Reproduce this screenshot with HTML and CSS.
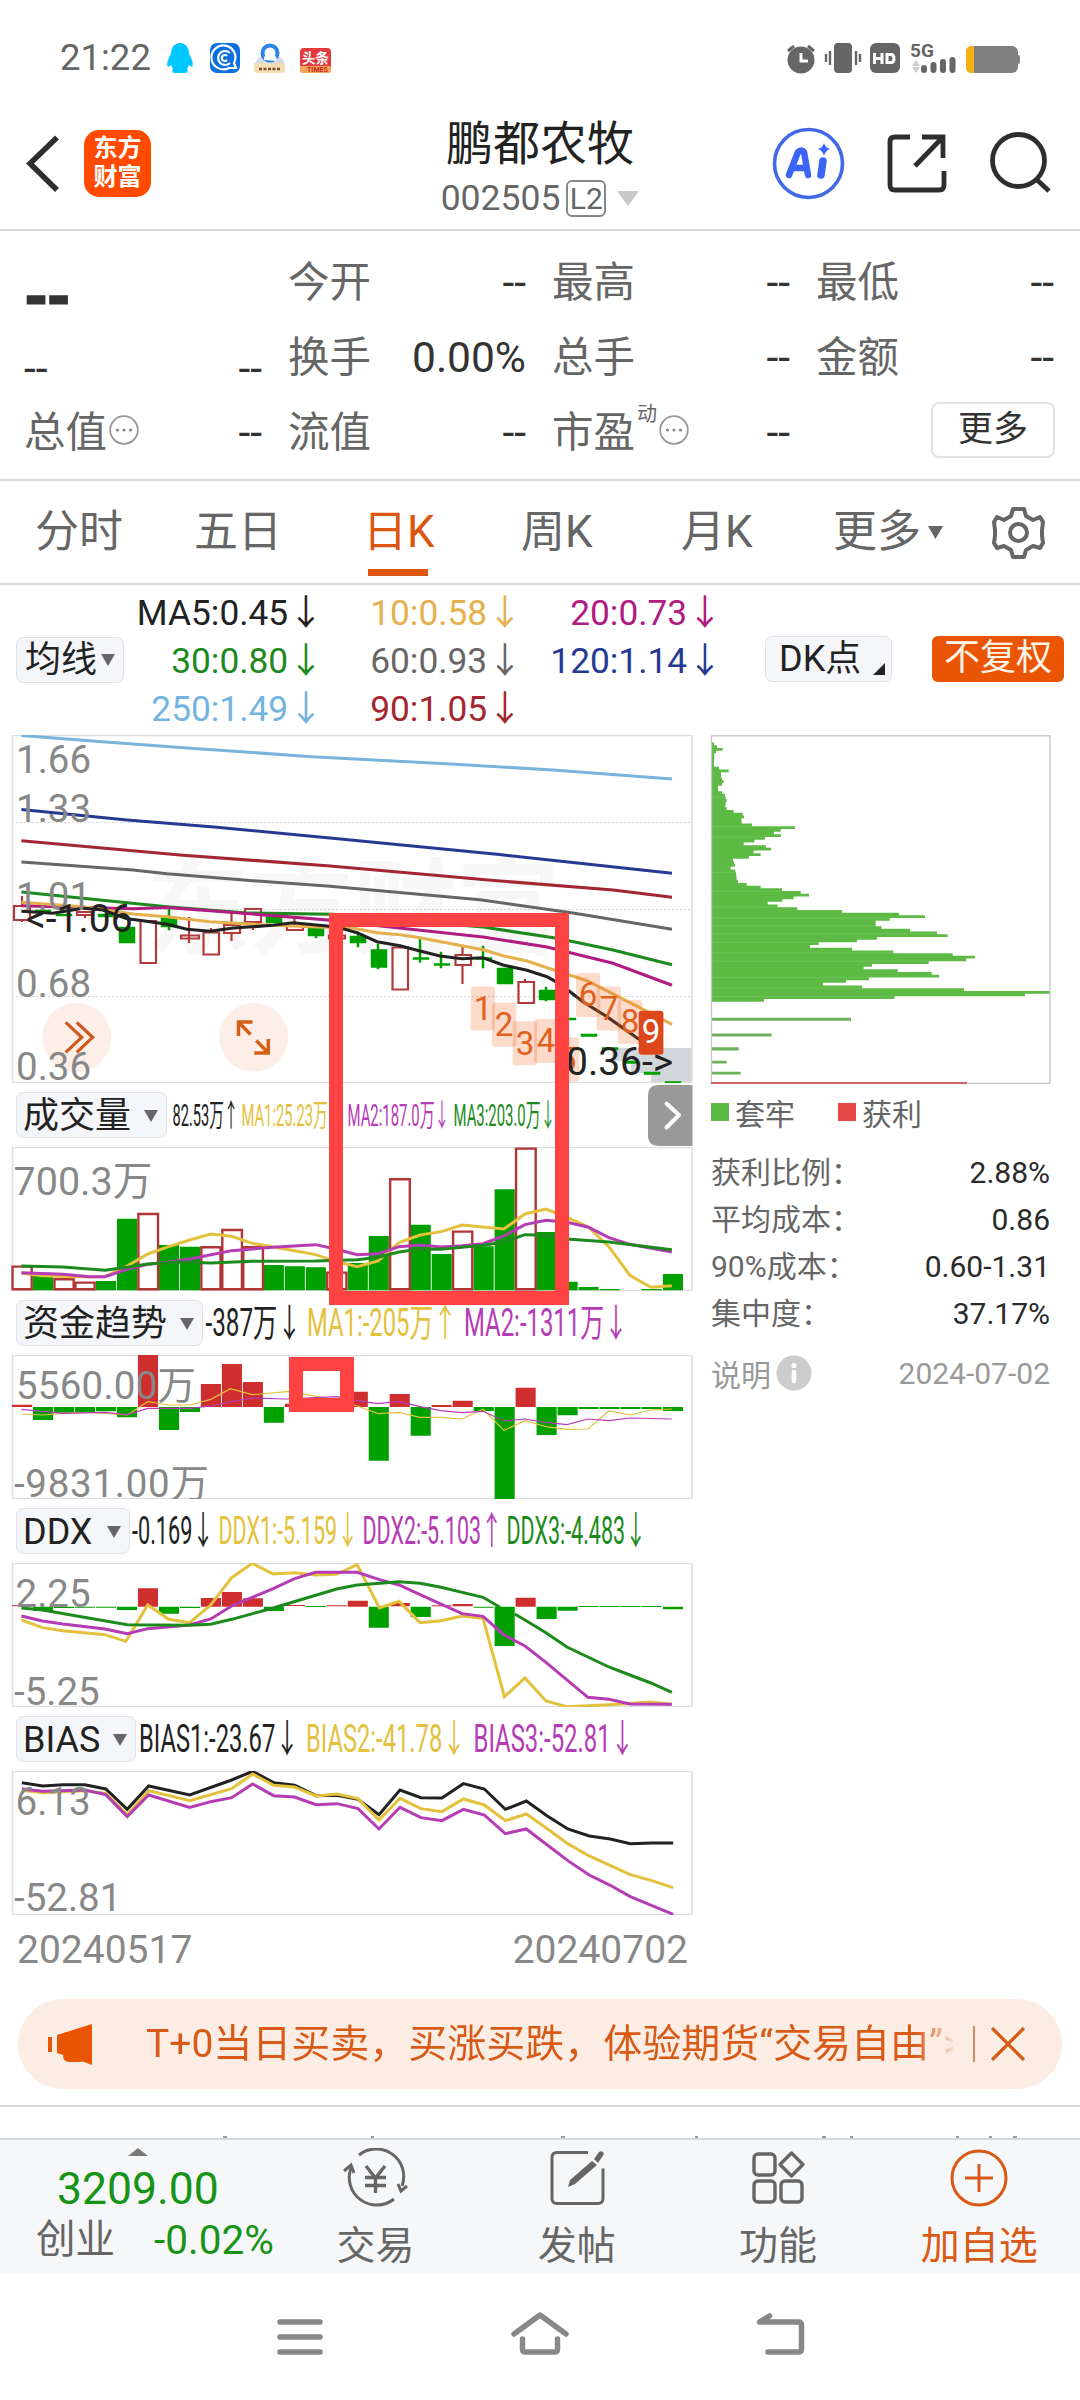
FILE: index.html
```html
<!DOCTYPE html>
<html lang="zh-CN">
<head>
<meta charset="utf-8">
<title>鹏都农牧 002505</title>
<link rel="stylesheet" href="styles.css">
</head>
<body>
<div class="phone">
  <div class="status">
    <span class="clock">21:22</span>
    <svg class="status-apps" width="180" height="40" viewBox="160 38 180 40">
      <path fill="#00c8ff" d="M180 43c6 0 9 5 9 11 3 5 5 10 3 13l-3-2-2 4c2 3 0 4-3 4h-8c-3 0-5-1-3-4l-2-4-3 2c-2-3 0-8 3-13 0-6 3-11 9-11z"/>
      <rect x="210" y="43" width="30" height="30" rx="7" fill="#0a6fe0"/>
      <g fill="none" stroke="#fff" stroke-width="2.2"><path d="M229 68a12 12 0 1 1 5-5l2 5z"/><path d="M230 53a7 7 0 1 0 0 10"/><path d="M227 56a3 3 0 1 0 0 4"/></g>
      <path fill="#d5dbe6" d="M255 64q2-8 15-10 13 2 15 10z"/>
      <circle cx="270" cy="53" r="7.500" fill="#fff" stroke="#2f84e8" stroke-width="4"/>
      <path fill="#fff" d="M264 60q0-7 6-7 7 2 7 8z"/>
      <path fill="#f3dfb5" d="M254 63h31v7q0 3-4 3h-23q-4 0-4-3z"/>
      <path stroke="#7a4d24" stroke-width="2.500" stroke-dasharray="3 1.500" d="M259 69h22"/>
      <rect x="300" y="48" width="31" height="25" rx="4" fill="#e4393c"/>
      <path fill="#f2a45a" d="M300 66h31v4q0 3-3 3h-25q-3 0-3-3z"/>
      <text x="302" y="63" font-size="13.500" font-weight="700" fill="#fff">头条</text>
      <text x="307" y="72" font-size="7" font-weight="700" fill="#c22">TIMES</text>
    </svg>
    <svg class="status-sys" width="240" height="40" viewBox="784 38 240 40">
      <circle cx="801" cy="60" r="13.500" fill="#666"/>
      <path d="M801 53v8h7" fill="none" stroke="#fff" stroke-width="3"/>
      <path d="M788 51l6-5M814 51l-6-5" stroke="#666" stroke-width="3"/>
      <rect x="834" y="43" width="18" height="30" rx="4" fill="#666"/>
      <path d="M830 51v14M856 51v14M826 54v8M860 54v8" stroke="#666" stroke-width="2.400"/>
      <rect x="870" y="43" width="30" height="30" rx="6" fill="#666"/>
      <path d="M874.500 53v11M882 53v11M874.500 58.500H882M887 54.500h4q3 0 3 4t-3 4h-4z" fill="none" stroke="#fff" stroke-width="3"/>
      <text x="910" y="57" font-size="19" font-weight="700" fill="#666">5G</text>
      <path fill="#ccc" d="M912 66l4-6 4 6zM912 67l4 6 4-6z"/>
      <path stroke="#666" stroke-width="6" stroke-linecap="round" d="M924 68v2M933.500 65v5M943 62v8M952.500 60v10"/>
      <rect x="966" y="46" width="52" height="27" rx="6" fill="#808080"/>
      <path fill="#f8b312" d="M972 46h2v27h-2q-6 0-6-6v-15q0-6 6-6z"/>
      <rect x="1016" y="55" width="4" height="9" rx="2" fill="#808080"/>
    </svg>
  </div>

  <header class="topbar">
    <svg class="back" width="40" height="66" viewBox="24 130 40 66"><path d="M57 137.500L30 163.500 57 190" fill="none" stroke="#2e2e2e" stroke-width="5.500"/></svg>
    <div class="brand"><span>东方</span><span>财富</span></div>
    <div class="stock">
      <h1>鹏都农牧</h1>
      <div class="code">002505<span class="level">L2</span><svg width="22" height="15" viewBox="0 0 22 15"><path fill="#c8c8c8" d="M0 0h22L11 15z"/></svg></div>
    </div>
    <svg class="actions" width="292" height="80" viewBox="768 124 292 80">
      <circle cx="808.500" cy="163.500" r="34" fill="none" stroke="#4169e8" stroke-width="3.600"/>
      <path d="M789 175l9-23q4-3 6 0l4 23M793 168h13" fill="none" stroke="#3b66f5" stroke-width="6.500" stroke-linecap="round" stroke-linejoin="round"/>
      <path d="M823 161l-2 14" stroke="#3b66f5" stroke-width="7.500" stroke-linecap="round"/>
      <path d="M824 143q1.500 5 6 6-4.500 1.500-6 7-1.500-5.500-6-7 4.500-1 6-6z" fill="#3b66f5"/>
      <g fill="none" stroke="#2e2e2e" stroke-width="4.800"><path d="M910 137h-15q-5 0-5 5v43q0 5 5 5h44q5 0 5-5v-14"/><path d="M922 137h21v21M943 137l-28 29"/><circle cx="1018.500" cy="160.500" r="26"/><path d="M1036 179l13 12"/></g>
    </svg>
  </header>

  <section class="quotes">
    <div class="q"><b class="price">--</b></div>
    <div class="q"><span>今开</span><i>--</i></div>
    <div class="q"><span>最高</span><i>--</i></div>
    <div class="q"><span>最低</span><i>--</i></div>
    <div class="q low"><i>--</i><i>--</i></div>
    <div class="q"><span>换手</span><i>0.00%</i></div>
    <div class="q"><span>总手</span><i>--</i></div>
    <div class="q"><span>金额</span><i>--</i></div>
    <div class="q"><span>总值<svg class="dots" width="30" height="30" viewBox="0 0 30 30"><circle cx="15" cy="15" r="13.800" fill="none" stroke="#999" stroke-width="1.800"/><path stroke="#888" stroke-width="3.200" stroke-linecap="round" d="M8.500 15h0M15 15h0M21.500 15h0"/></svg></span><i>--</i></div>
    <div class="q"><span>流值</span><i>--</i></div>
    <div class="q"><span>市盈<sup>动</sup><svg class="dots" width="30" height="30" viewBox="0 0 30 30"><circle cx="15" cy="15" r="13.800" fill="none" stroke="#999" stroke-width="1.800"/><path stroke="#888" stroke-width="3.200" stroke-linecap="round" d="M8.500 15h0M15 15h0M21.500 15h0"/></svg></span><i>--</i></div>
    <div class="q end"><button class="more">更多</button></div>
  </section>

  <nav class="tabs">
    <span class="t1">分时</span><span class="t2">五日</span><span class="t3 on">日K</span><span class="t4">周K</span><span class="t5">月K</span>
    <span class="t6">更多<svg width="15" height="13" viewBox="0 0 14 12"><path fill="#666" d="M0 0h14L7 12z"/></svg></span>
    <svg class="gear" width="56" height="56" viewBox="990 504 56 56"><g fill="none" stroke="#666" stroke-width="4" stroke-linejoin="round"><path d="M1013 509h11l2 7 7 4 7-3 3 5 0 0-1 8v6l1 7-3 5-7-2-7 4-2 7h-11l-2-7-7-4-7 2-3-5 1-7v-6l-1-8 3-5 7 3 7-4z"/><circle cx="1018.500" cy="532.500" r="8.500"/></g></svg>
  </nav>

  <section class="averages">
    <div class="chip ma-chip">均线<svg width="14" height="12" viewBox="0 0 14 12"><path fill="#666" d="M0 0h14L7 12z"/></svg></div>
    <div class="ma">
      <span class="c-black">MA5:0.45↓</span><span class="c-gold">10:0.58↓</span><span class="c-pink">20:0.73↓</span>
      <span class="c-green">30:0.80↓</span><span class="c-gray">60:0.93↓</span><span class="c-navy">120:1.14↓</span>
      <span class="c-sky">250:1.49↓</span><span class="c-red">90:1.05↓</span>
    </div>
    <div class="chip dk">DK点<svg width="12" height="12" viewBox="0 0 12 12"><path fill="#222" d="M12 0v12H0z"/></svg></div>
    <div class="adjust">不复权</div>
  </section>

  <main class="board">
    <div class="charts">
      <svg class="plot" width="700" height="348" viewBox="0 735 700 348">
        <g fill="#d3d6db"><path d="M612 1048h80v36h-41v-11h-20v-12h-19z"/></g>
        <text x="146" y="946" font-size="104" font-weight="700" fill="#f7f7f7" textLength="414">东方财富</text>
        <path d="M12 822.500h680M12 909.500h680M12 996.500h680" stroke="#d4d4d4" stroke-width="1.200" stroke-dasharray="2 2"/>
        <rect x="12.500" y="735.500" width="679.500" height="347" fill="none" stroke="#dedede" stroke-width="1.500"/>
        <g fill="none" stroke="#b33a3a" stroke-width="2.200">
          <path d="M14 906h16v14H14zM22 896v10M22 920v2M77 912h15v3H77zM85 915v3M140.500 921h15.500v42h-15.500zM181 935.500h18v3h-18zM189 917v26M203.500 932.500h15.500v22h-15.500zM211 928v4M224 925h16v8h-16zM231.500 913v12M231.500 933v8M245 909h16v13h-16zM253 922v8M287 926h16v4h-16zM294.500 917v9M329 935.500h16v3h-16zM392.500 947.500h15.500v42h-15.500zM455.500 955h15.500v10h-15.500zM462.500 947v8M462.500 965v19M518.500 982h15.500v21h-15.500zM525 979v3"/>
        </g>
        <path fill="#00a000" stroke="#00a000" stroke-width=".5" d="M35 910h16v3H35zM56 914h16v2H56zM98 914h15v3H98zM119 927h16v16h-16zM161 917h16v10h-16zM168 909h2v21h-2zM266 916h16v7h-16zM308 927h16v9h-16zM315 926h2v12h-2zM350 936h16v7h-16zM357 932h2v15h-2zM371 949.500h16v18h-16zM377 944h2v25h-2zM413 957.500h16v2h-16zM419 938.500h2v24h-2zM434 963.500h16v2h-16zM440 952h2v16h-2zM476 957.500h16v2h-16zM482 946h2v22h-2zM497 968h16v16h-16zM539 990h16v10h-16zM545 987h2v14h-2zM560 1018h16v2h-16zM581 1034h16v2.500h-16zM602 1047.500h16v2.500h-16zM623 1061h16v2.500h-16zM644 1072h16v2.500h-16zM665 1081.500h16v2.500h-16z"/>
        <g fill="none" stroke-width="3.100">
          <path stroke="#79b4dc" d="M21.400 735.500L89 740.700 187 748 312 756.700 446 763.700 553 770 672 779"/>
          <path stroke="#263a94" d="M21.400 809.500L127 820 214 827 330 838 497 854.300 672 873.300"/>
          <path stroke="#a32630" d="M21.400 840.700L180 855 330 866 497 880.700 613 890 672 897.300"/>
          <path stroke="#666" d="M21.400 862L133 870 167 873.700 247 880.300 330 886.300 480 899.700 573 913 672 929.300"/>
          <path stroke="#1c8a1c" d="M21.400 892L100 900 167 906.700 247 913 333 914.300 483 927 557 938.300 613 950 672 964.700"/>
          <path stroke="#b01c80" d="M21.400 905.700L83 907.500 133 908.700 167 907.500 233 912.500 328 920 390 927 483 937 547 947 613 963.300 672 985.300"/>
          <path stroke="#e5b04d" d="M21.400 902.300L83 906.700 133 914 167 916.700 210 921.700 273 925.300 323 927.300 350 927.500 377 932.700 400 934.700 420 937.700 483 949.700 503 955.700 527 961 550 968.700 587 980.700 630 1002.700 672 1024.300"/>
          <path stroke="#222" d="M21.400 911.300L53 913.300 83 908.300 103 910 127 918.700 143 920.700 167 924.300 187 929.300 210 931.300 233 928 273 925.300 293 922.700 327 926 345 929.300 357 932.700 377 941.700 400 945.700 420 951 440 956 462 958.700 483 957.700 503 965 527 970.300 547 976.700 557 982.300 570 991.700 583 1001.700 607 1016.700 640 1040"/>
        </g>
        <circle cx="76.700" cy="1037.300" r="34.500" fill="#fdefe8"/><circle cx="253.700" cy="1037.300" r="34.500" fill="#fdefe8"/>
        <path fill="none" stroke="#d0581c" stroke-width="3.200" d="M65.700 1022.300l16 15-16 15M76.700 1022.300l16 15-16 15"/>
        <path fill="none" stroke="#d65f17" stroke-width="3.500" d="M238.500 1036v-14h14M238.500 1022l12 12.500M268.300 1039v14h-14M268.300 1053l-12-12.500"/>
        <g class="axis"><text x="16" y="772.500">1.66</text><text x="16" y="821.700">1.33</text><text x="16" y="910">1.01</text><text x="16" y="996.700">0.68</text><text x="16" y="1079.700">0.36</text></g>
        <text x="26" y="931.500" font-size="39" fill="#222">&lt;-1.06</text>
        <g fill="#f4631e" fill-opacity=".23"><rect x="470.700" y="986.500" width="24.300" height="44" rx="3"/><rect x="492" y="1002.700" width="24.300" height="44" rx="3"/><rect x="512.700" y="1021.300" width="24.300" height="44" rx="3"/><rect x="534" y="1019" width="24.300" height="44" rx="3"/><rect x="555" y="1037.500" width="24.300" height="44" rx="3"/><rect x="576" y="973" width="24.300" height="44" rx="3"/><rect x="596.700" y="986.500" width="24.300" height="44" rx="3"/><rect x="617.700" y="1000" width="24.300" height="44" rx="3"/></g>
        <g class="nine"><text x="483" y="1019.500">1</text><text x="504" y="1035.500">2</text><text x="525" y="1054.500">3</text><text x="546" y="1052">4</text><text x="567" y="1070.500">5</text><text x="588" y="1006">6</text><text x="609" y="1019.500">7</text><text x="630" y="1033">8</text></g>
        <text x="566" y="1075" font-size="39" fill="#222">0.36-&gt;</text>
        <rect x="638.700" y="1010.700" width="24.700" height="44" rx="3" fill="#dc481a"/>
        <g class="nine"><text x="651" y="1043" class="w">9</text></g>
      </svg>

      <div class="ind">
        <div class="chip w1">成交量<svg width="14" height="12" viewBox="0 0 14 12"><path fill="#666" d="M0 0h14L7 12z"/></svg></div>
        <svg width="533" height="64" viewBox="167 1083 533 64" font-size="31">
          <text x="172.500" y="1126" textLength="66" lengthAdjust="spacingAndGlyphs" fill="#222">82.53万↑</text>
          <text x="241.500" y="1126" textLength="101" lengthAdjust="spacingAndGlyphs" fill="#e3c13c">MA1:25.23万↓</text>
          <text x="347.500" y="1126" textLength="102" lengthAdjust="spacingAndGlyphs" fill="#b53cb5">MA2:187.0万↓</text>
          <text x="453.500" y="1126" textLength="102" lengthAdjust="spacingAndGlyphs" fill="#1c8a1c">MA3:203.0万↓</text>
        </svg>
      </div>
      <svg class="plot" width="700" height="144" viewBox="0 1147 700 144">
        <rect x="12.500" y="1147.500" width="679.500" height="143" fill="none" stroke="#dedede" stroke-width="1.500"/>
        <g transform="translate(0 1080) scale(.4464 .3333)">
          <path fill="#00a000" d="M74 587h45v44h-45zM215 603h45v28h-45zM262 416h45v215h-45zM356 495h45v136h-45zM403 500h45v131h-45zM591 555h45v76h-45zM638 559h45v72h-45zM685 562h45v69h-45zM779 549h45v82h-45zM826 468h45v163h-45zM920 434h45v197h-45zM967 522h45v109h-45zM1061 499h45v132h-45zM1108 328h45v303h-45zM1202 456h45v175h-45zM1249 605h45v26h-45zM1296 621h45v10h-45zM1343 627h45v4h-45zM1437 627h45v4h-45zM1485 582h45v49h-45z"/>
          <path class="ln" fill="#fff" stroke="#b03636" stroke-width="2.400" d="M28 560h43v68h-43zM122 598h43v30h-43zM169 608h43v20h-43zM310 402h44v226h-44zM451 502h43v126h-43zM498 450h44v178h-44zM545 502h44v126h-44zM733 578h43v50h-43zM874 298h44v330h-44zM1015 455h43v173h-43zM1156 206h44v422h-44z"/>
          <g class="ln3">
            <path stroke="#e3c13c" d="M48 580L95 587 165 590 235 590 285 558 331 522 378 500 425 480 472 462 519 469 565 490 610 500 660 512 707 524 754 545 800 560 847 543 894 488 941 465 988 455 1035 435 1082 441 1129 447 1176 402 1223 387 1270 412 1317 440 1364 500 1411 586 1458 622 1505 617"/>
            <path stroke="#b53cb5" d="M48 578L141 583 200 590 235 590 285 568 331 553 378 546 425 537 519 512 610 502 707 494 754 508 800 524 847 521 894 500 941 495 988 501 1035 497 1082 491 1129 468 1176 434 1223 421 1270 427 1317 441 1364 473 1411 493 1505 516"/>
            <path stroke="#1c8a1c" d="M48 558L141 561 235 571 285 562 331 552 400 546 472 549 565 544 707 543 800 539 847 532 894 516 941 507 988 508 1082 496 1129 486 1176 464 1223 466 1270 477 1364 486 1505 509"/>
          </g>
        </g>
        <g class="axis"><text x="13.500" y="1195" font-size="39.500">700.3万</text></g>
      </svg>

      <div class="ind">
        <div class="chip w2">资金趋势<svg width="14" height="12" viewBox="0 0 14 12"><path fill="#666" d="M0 0h14L7 12z"/></svg></div>
        <svg width="497" height="64" viewBox="203 1291 497 64" font-size="38">
          <text x="205.500" y="1335.700" textLength="96" lengthAdjust="spacingAndGlyphs" fill="#222">-387万↓</text>
          <text x="307" y="1335.700" textLength="150" lengthAdjust="spacingAndGlyphs" fill="#e3c13c">MA1:-205万↑</text>
          <text x="464" y="1335.700" textLength="164" lengthAdjust="spacingAndGlyphs" fill="#b53cb5">MA2:-1311万↓</text>
        </svg>
      </div>
      <svg class="plot" width="700" height="144" viewBox="0 1355 700 144">
        <rect x="12.500" y="1355.500" width="679.500" height="143" fill="none" stroke="#dedede" stroke-width="1.500"/>
        <g transform="translate(0 1300) scale(.4464 .3333)">
          <path fill="#00a000" d="M74 321h45v39h-45zM121 321h45v17h-45zM168 321h45v15h-45zM215 321h45v13h-45zM262 321h45v31h-45zM356 321h45v69h-45zM403 321h45v15h-45zM591 321h45v47h-45zM826 321h45v161h-45zM920 321h45v86h-45zM1061 321h45v12h-45zM1108 321h45v276h-45zM1202 321h45v84h-45zM1249 321h45v25h-45zM1296 321h45v6h-45zM1343 321h45v6h-45zM1390 321h45v6h-45zM1437 321h45v6h-45zM1485 321h45v12h-45z"/>
          <path fill="#cf2e2e" d="M27 314h45v7h-45zM309 165h45v156h-45zM450 252h45v69h-45zM497 192h45v129h-45zM544 246h45v75h-45zM638 311h45v10h-45zM779 275h45v46h-45zM873 282h45v39h-45zM967 315h45v6h-45zM1014 302h45v19h-45zM1155 263h45v58h-45z"/>
          <g class="ln1">
            <path stroke="#e3c13c" d="M48 342L95 345 141 340 200 337 285 345 331 305 378 315 425 315 472 298 516 266 565 284 648 274 720 292 754 300 800 318 847 341 894 337 941 352 988 352 1035 357 1082 328 1129 391 1176 362 1223 380 1270 388 1317 387 1364 333 1411 345 1458 330 1505 327"/>
            <path stroke="#b53cb5" d="M48 328L141 340 235 337 285 344 331 325 425 325 472 318 519 305 565 294 640 297 754 290 800 302 847 311 894 304 941 320 988 332 1035 338 1082 334 1129 363 1176 357 1223 367 1270 374 1317 357 1364 362 1411 354 1505 357"/>
          </g>
        </g>
        <g class="axis"><text x="16" y="1399" textLength="180">5560.00万</text><text x="14" y="1496.700" textLength="195">-9831.00万</text></g>
      </svg>

      <div class="ind">
        <div class="chip w3">DDX<svg width="14" height="12" viewBox="0 0 14 12"><path fill="#666" d="M0 0h14L7 12z"/></svg></div>
        <svg width="570" height="64" viewBox="130 1499 570 64" font-size="38.500">
          <text x="132" y="1544" textLength="82" lengthAdjust="spacingAndGlyphs" fill="#222">-0.169↓</text>
          <text x="218.500" y="1544" textLength="140" lengthAdjust="spacingAndGlyphs" fill="#e3c13c">DDX1:-5.159↓</text>
          <text x="362.500" y="1544" textLength="140" lengthAdjust="spacingAndGlyphs" fill="#b53cb5">DDX2:-5.103↑</text>
          <text x="506.500" y="1544" textLength="140" lengthAdjust="spacingAndGlyphs" fill="#1c8a1c">DDX3:-4.483↓</text>
        </svg>
      </div>
      <svg class="plot" width="700" height="144" viewBox="0 1563 700 144">
        <rect x="12.500" y="1563.500" width="679.500" height="143" fill="none" stroke="#dedede" stroke-width="1.500"/>
        <g transform="translate(0 1510) scale(.4464 .3333)">
          <path fill="#00a000" d="M74 290h45v13h-45zM121 290h45v4h-45zM168 290h45v3h-45zM215 290h45v3h-45zM262 290h45v10h-45zM356 290h45v21h-45zM403 290h45v4h-45zM591 290h45v13h-45zM685 288h45v3h-45zM826 290h45v63h-45zM920 290h45v31h-45zM1061 290h45v3h-45zM1108 290h45v118h-45zM1202 290h45v37h-45zM1249 290h45v12h-45zM1296 288h45v3h-45zM1343 288h45v3h-45zM1390 288h45v3h-45zM1437 288h45v3h-45zM1485 290h45v8h-45z"/>
          <path fill="#cf2e2e" d="M27 286h45v3h-45zM309 235h45v55h-45zM450 264h45v26h-45zM497 246h45v44h-45zM544 265h45v25h-45zM638 285h45v3h-45zM732 286h45v3h-45zM779 272h45v18h-45zM873 279h45v10h-45zM967 286h45v3h-45zM1014 282h45v7h-45zM1155 263h45v27h-45z"/>
          <g class="ln3">
            <path stroke="#e3c13c" d="M48 330L95 353 141 362 235 374 282 394 331 285 378 328 425 338 472 285 519 203 565 160 612 192 660 188 707 195 754 193 800 164 850 294 894 274 941 338 988 332 1035 318 1082 325 1130 560 1176 504 1223 573 1270 590 1317 587 1364 584 1458 576 1505 583"/>
            <path stroke="#b53cb5" d="M48 318L95 333 141 342 235 357 285 371 331 356 425 345 472 327 519 288 565 262 612 236 660 206 707 187 800 187 850 209 894 225 941 254 1035 311 1082 319 1129 375 1176 408 1223 457 1317 562 1364 568 1411 582 1505 583"/>
            <path stroke="#1c8a1c" d="M48 294L95 300 285 344 425 346 472 343 519 328 612 294 754 237 800 225 894 215 941 220 988 232 1082 262 1120 292M1153 312L1176 330 1223 368 1270 411 1364 471 1411 495 1458 519 1505 547"/>
          </g>
        </g>
        <g class="axis"><text x="15.500" y="1606.700">2.25</text><text x="14" y="1704.700">-5.25</text></g>
      </svg>

      <div class="ind">
        <div class="chip w4">BIAS<svg width="14" height="12" viewBox="0 0 14 12"><path fill="#666" d="M0 0h14L7 12z"/></svg></div>
        <svg width="564" height="64" viewBox="136 1707 564 64" font-size="38.500">
          <text x="139" y="1752" textLength="160" lengthAdjust="spacingAndGlyphs" fill="#222">BIAS1:-23.67↓</text>
          <text x="306" y="1752" textLength="160" lengthAdjust="spacingAndGlyphs" fill="#e3c13c">BIAS2:-41.78↓</text>
          <text x="473.500" y="1752" textLength="161" lengthAdjust="spacingAndGlyphs" fill="#b53cb5">BIAS3:-52.81↓</text>
        </svg>
      </div>
      <svg class="plot" width="700" height="144" viewBox="0 1771 700 144">
        <rect x="12.500" y="1771.500" width="679.500" height="143" fill="none" stroke="#dedede" stroke-width="1.500"/>
        <g transform="translate(0 1720) scale(.4464 .3333)" class="ln3">
          <path stroke="#222" d="M49 188L96 198 141 194 190 194 237 207 285 268 333 198 425 225 519 180 566 154 613 188 660 196 708 227 755 226 802 238 849 284 896 210 943 233 990 234 1038 191 1085 207 1132 268 1179 243 1226 288 1272 327 1320 348 1367 357 1412 371 1460 369 1508 369"/>
          <path stroke="#e3c13c" d="M49 211L96 218 190 212 237 220 285 284 333 212 425 242 519 206 566 162 613 196 660 201 708 228 755 222 802 236 849 300 896 235 943 266 990 275 1038 237 1085 255 1132 302 1179 282 1226 326 1272 371 1320 408 1412 464 1460 482 1508 503"/>
          <path stroke="#b53cb5" d="M49 207L96 214 190 210 237 224 285 290 333 225 425 262 472 245 519 233 566 192 613 227 660 231 708 254 755 251 802 266 849 327 896 262 943 293 990 302 1038 268 1085 285 1132 341 1179 327 1226 375 1272 422 1320 465 1367 496 1412 530 1508 583"/>
        </g>
        <g class="axis"><text x="15.500" y="1815">6.13</text><text x="14" y="1910.700">-52.81</text></g>
      </svg>
      <div class="dates"><span>20240517</span><span>20240702</span></div>

      <svg class="handle" width="45" height="61" viewBox="648 1085 45 61"><path fill="#999" d="M659 1085h33.500v61H659q-11 0-11-11v-39q0-11 11-11z"/><path fill="none" stroke="#fff" stroke-width="4" stroke-linecap="round" stroke-linejoin="round" d="M666.500 1103.500l12.500 11.500-12.500 12.500"/></svg>
      <div class="mark mark-big"></div>
      <div class="mark mark-small"></div>
    </div>

    <aside class="cost">
      <svg class="dist" width="380" height="350" viewBox="700 735 380 350">
        <g transform="translate(690 580) scale(.33333 .34435)">
          <path fill="#5cba45" d="M63 472H72v7.840H81v7.840H98v7.840H78v7.840H73v15.700H72v23.500H87v7.840H116v7.840H93v15.700H96v7.840H101v7.840H96v7.840H84v15.700H96v7.840H105v7.840H107v7.840H110v7.840H107v7.840H106v7.840H110v7.840H131v7.840H158v7.840H162v7.840H154v7.840H155v7.840H186v7.840H315v7.840H272v7.840H252v7.840H273v7.840H225v7.840H193v7.840H161v7.840H228v7.840H243v7.840H191v7.840H212v7.840H177v7.840H129v7.840H132v7.840H135v7.840H122v7.840H136v7.840H138v7.840H139v7.840H140v7.840H144v7.840H170v7.840H212v7.840H276v7.840H332v7.840H357v7.840H311v7.840H277v7.840H233v7.840H263v7.840H322v7.840H456v7.840H627v7.840H705v7.840H599v7.840H557v15.700H574v7.840H660v7.840H741v7.840H773v7.840H561v7.840H501v7.840H386v7.840H360v7.840H486v7.840H610v7.840H788v7.840H855v7.840H828v7.840H716v7.840H546v7.840H521v7.840H623v7.840H725v7.840H747v7.840H537v7.840H468v7.840H399v7.840H516v7.840H822v7.840H1080v7.840H1005v7.840H613v7.840H222V1225H63z"/>
          <path stroke="#76c862" stroke-width="2" d="M63 560H93M63 630H105M63 716H186M63 747H225M63 849H136M63 904H276M63 950H263M63 982H599M63 1005H557M63 1028H741M63 1052H386M63 1083H610M63 1107H716M63 1154H537M63 1185H516M63 1209H613"/>
          <path fill="#6db05c" d="M63 1271H483v9H63zM63 1317H245v9H63zM63 1357H146v9H63zM63 1396H110v8H63zM63 1428H152v8H63z"/>
        </g>
        <rect x="711.500" y="735.800" width="338.500" height="347.500" fill="none" stroke="#c4c4c4" stroke-width="1.300"/>
        <path stroke="#cc6464" stroke-width="1.800" d="M711 1083h256"/>
      </svg>
      <div class="key"><i class="g"></i>套牢<i class="r"></i>获利</div>
      <dl>
        <div><dt>获利比例：</dt><dd>2.88%</dd></div>
        <div><dt>平均成本：</dt><dd>0.86</dd></div>
        <div><dt>90%成本：</dt><dd>0.60-1.31</dd></div>
        <div><dt>集中度：</dt><dd>37.17%</dd></div>
      </dl>
      <div class="note"><span>说明</span><svg width="36" height="36" viewBox="0 0 36 36"><circle cx="18" cy="18" r="17.500" fill="#ccc"/><circle cx="18" cy="10.500" r="2.600" fill="#fff"/><path stroke="#fff" stroke-width="4.600" stroke-linecap="round" d="M18 17v9"/></svg><time>2024-07-02</time></div>
    </aside>
  </main>

  <div class="promo">
    <svg width="48" height="42" viewBox="46 2022 48 42"><path fill="#ea5504" d="M48 2036h4v15h-4zM57 2034l35-11v41l-8-3q-2-1-4 0h-11q-6 0-6-7l-6-2z"/></svg>
    <p>T+0当日买卖，买涨买跌，体验期货“交易自由”&gt;</p>
    <i></i>
    <svg width="36" height="36" viewBox="0 0 36 36"><path stroke="#d95a17" stroke-width="3.200" d="M2 2l32 32M34 2L2 34"/></svg>
  </div>
  <div class="peek"><svg width="1080" height="2" viewBox="0 0 1080 2"><path stroke="#999" stroke-width="2" d="M223 1h4M371 1h3M561 1h4M695 1h3M822 1h4M850 1h3M956 1h3M989 1h3M1013 1h4"/></svg></div>

  <footer class="toolbar">
    <div class="index">
      <svg width="20" height="8" viewBox="0 0 20 8"><path fill="#7a7a7a" d="M10 0l10 8H0z"/></svg>
      <b>3209.00</b>
      <p><span>创业</span><em>-0.02%</em></p>
    </div>
    <div class="tool"><svg width="68" height="60" viewBox="341 2148 68 60"><g fill="none" stroke="#666" stroke-width="3"><path d="M359 2155a27.500 27.500 0 0 1 43 31M394 2199a27.500 27.500 0 0 1-43-31"/><path d="M344 2171l7-6 3 8M407 2186l-6 5-3-7"/><path stroke-width="3.400" d="M366 2166l9.500 12 9.500-12M375.500 2178v15M365 2177.500h21M365 2185.500h21"/></g></svg>交易</div>
    <div class="tool"><svg width="68" height="60" viewBox="543 2148 68 60"><g fill="none" stroke="#666" stroke-width="3"><path d="M588 2152.500h-31q-5 0-5 5v41q0 5 5 5h41q5 0 5-5v-30"/></g><path fill="#666" d="M594 2159l5-7q4-2 5 2l-6 9zM592 2161l5 4-22 19-7 3 2-7z"/></svg>发帖</div>
    <div class="tool"><svg width="68" height="60" viewBox="744 2148 68 60"><g fill="none" stroke="#666" stroke-width="3.400"><rect x="754" y="2154" width="21" height="21" rx="4"/><rect x="754" y="2181" width="21" height="21" rx="4"/><rect x="781" y="2181" width="21" height="21" rx="4"/><path d="M791.500 2153l11.500 11.500-11.500 11.500-11.500-11.500z" stroke-linejoin="round"/></g></svg>功能</div>
    <div class="tool add"><svg width="68" height="60" viewBox="945 2148 68 60"><g fill="none" stroke="#d95a17" stroke-width="3"><circle cx="979" cy="2178" r="27"/><path d="M965 2178h28M979 2164v28"/></g></svg>加自选</div>
  </footer>

  <div class="sysnav">
    <svg width="1080" height="126" viewBox="0 2274 1080 126"><g fill="none" stroke="#888" stroke-width="5.500" stroke-linecap="round" stroke-linejoin="round"><path d="M280 2322h40M280 2337h40M280 2352h40"/><path d="M514 2334l26-19 26 19M522.500 2339v10q0 3 3 3h29q3 0 3-3v-10"/><path d="M768 2352h30q3.500 0 3.500-3v-24q0-3-3.500-3h-38.500l10-6"/></g></svg>
  </div>
</div>
</body>
</html>
```
FILE: styles.css
```css
* { box-sizing: border-box; }
body { margin: 0; background: #fff; font-family: Roboto, "Noto Sans CJK SC", sans-serif; color: #222; }
svg { display: block; flex: none; font-family: Roboto, "Noto Sans CJK SC", sans-serif; }
h1, p, dl, dd { margin: 0; }
i, em { font-style: normal; }
.phone { width: 1080px; height: 2400px; overflow: hidden; background: #fff; }

.status { height: 100px; display: flex; align-items: flex-start; padding: 38px 56px 0 60px; }
.clock { width: 100px; font-size: 36.500px; line-height: 40px; color: #666; }
.status-sys { margin-left: auto; }

.topbar { height: 131px; display: flex; align-items: flex-start; border-bottom: 2px solid #dadada; }
.back { margin: 30px 20px 0 24px; }
.brand { width: 67px; height: 67px; margin-top: 30px; padding-top: 4px; border-radius: 15px; background: #ff4a00; color: #fff; display: flex; flex-direction: column; align-items: center; font-size: 24px; line-height: 29px; font-weight: 700; }
.stock { flex: 1; padding: 14px 0 0 161px; display: flex; flex-direction: column; align-items: center; }
h1 { font-size: 47px; font-weight: 400; line-height: 60px; }
.code { display: flex; align-items: center; font-size: 35.500px; line-height: 49px; color: #666; }
.level { width: 40px; height: 37px; margin: 0 11px 0 6px; border: 2px solid #888; border-radius: 6px; font-size: 30px; line-height: 34px; text-align: center; }
.actions { margin: 24px 20px 0 0; }

.quotes { height: 250px; border-bottom: 2px solid #dadada; padding: 14px 25px 0 24px; display: grid; grid-template-columns: repeat(4, 238px); grid-auto-rows: 75px; column-gap: 26px; }
.q { display: flex; justify-content: space-between; align-items: center; font-size: 41.500px; line-height: 75px; color: #666; }
.q > span { display: flex; align-items: center; }
.q i { color: #333; font-size: 42.500px; }
.q.low { padding-top: 22px; }
.price { font-size: 57px; color: #333; padding: 29px 0 0 1px; -webkit-text-stroke: 3px #333; }
.dots { margin: -6px 0 0 2px; }
.q sup { font-size: 20px; line-height: 20px; margin: -38px 0 0 2px; width: 20px; }
.q.end { justify-content: flex-end; }
.more { width: 124px; height: 56px; margin: -5px -1px 0 0; padding: 0; border: 2px solid #e2e2e2; border-radius: 8px; background: #fff; font: inherit; font-size: 35px; line-height: 50px; color: #333; }

.tabs { height: 104px; border-bottom: 2px solid #dadada; display: grid; grid-template-columns: 160px 171px 155px 160px 152px 192px 90px; align-items: start; font-size: 44px; line-height: 105px; color: #666; }
.tabs span { display: flex; align-items: center; height: 103px; }
.t1, .t6 { padding-left: 35px; }
.t2 { padding-left: 34px; }
.t3 { padding-left: 32px; }
.t4 { padding-left: 35px; }
.t5 { padding-left: 35px; }
.tabs .on { color: #dd560f; background: linear-gradient(#dd560f, #dd560f) 37px 88px / 60px 7px no-repeat; }
.t6 svg { margin-left: 7px; }
.gear { margin: 23px 0 0; }

.averages { height: 150px; display: flex; align-items: flex-start; padding: 4px 0 0 16px; }
.chip { height: 46px; display: flex; align-items: center; border: 1.500px solid #dfe1e5; border-radius: 7px; background: #f5f6f9; font-size: 36px; line-height: 42px; white-space: nowrap; }
.ma-chip { width: 108px; margin-top: 48px; padding-left: 8px; }
.ma-chip svg { margin-left: 4px; }
.ma { width: 599px; display: grid; grid-template-columns: 199.500px 199px 200px; grid-auto-rows: 48px; text-align: right; font-size: 35.300px; line-height: 48px; }
.c-black { color: #222; } .c-gold { color: #e5b04d; } .c-pink { color: #b01c80; } .c-green { color: #1c8a1c; }
.c-gray { color: #666; } .c-navy { color: #263a94; } .c-sky { color: #74b4e0; } .c-red { color: #a32630; }
.dk { width: 127px; margin: 47px 40px 0 42px; padding-left: 13px; }
.dk svg { margin: 20px 0 0 12px; }
.adjust { width: 132px; height: 46px; margin-top: 47px; border-radius: 6px; background: #ea5504; color: #fff3e8; font-size: 36px; line-height: 45px; text-align: center; }

.board { height: 1264px; display: flex; }
.charts { width: 700px; position: relative; }
.ind { height: 64px; display: flex; align-items: center; padding-left: 16px; }
.ind .chip { justify-content: space-between; padding: 1px 8px 0 6px; }
.w1 { width: 151px; } .w2 { width: 187px; } .w3 { width: 114px; } .w4 { width: 120px; }
.axis { font-size: 38.500px; fill: #888; }
.nine { font-size: 33px; fill: #e2601c; text-anchor: middle; }
.nine .w { fill: #fff; }
.ln, .ln1 path, .ln3 path { vector-effect: non-scaling-stroke; }
.ln1 path { fill: none; stroke-width: 1.200px; }
.ln3 path { fill: none; stroke-width: 3px; }
.dates { display: flex; justify-content: space-between; padding: 13px 12px 0 17px; font-size: 39px; line-height: 44px; color: #888; }
.handle { position: absolute; left: 648px; top: 350px; }
.mark { position: absolute; border: 14px solid #ff4242; }
.mark-big { left: 329px; top: 178px; width: 240px; height: 392px; }
.mark-small { left: 289px; top: 622px; width: 65px; height: 55px; }

.cost { width: 380px; }
.key { display: flex; align-items: center; padding-left: 11px; height: 54px; font-size: 30px; color: #666; }
.key i { width: 18px; height: 18px; margin-right: 6px; background: #5cba45; }
.key .r { margin: 0 6px 0 43px; background: #e64848; }
dl { padding: 10px 30px 0 11px; }
dl div { display: flex; justify-content: space-between; height: 47px; font-size: 30px; line-height: 47px; color: #666; }
dd { color: #2a2a2a; }
.note { display: flex; align-items: center; height: 44px; margin: 14px 30px 0 11px; font-size: 30px; color: #999; }
.note svg { margin-left: 5px; }
.note time { margin-left: auto; }

.promo { width: 1044px; height: 90px; margin: 0 18px; padding-left: 28px; border-radius: 45px; background: #fcede4; display: flex; align-items: center; }
.promo p { width: 807px; margin-left: 52px; white-space: nowrap; overflow: hidden; font-size: 39px; line-height: 60px; color: #d95a17; -webkit-mask-image: linear-gradient(90deg, #000 770px, transparent 812px); mask-image: linear-gradient(90deg, #000 770px, transparent 812px); }
.promo i { width: 2px; height: 36px; margin: 0 15px 0 20px; background: #d98a60; }
.peek { height: 33px; margin-top: 16px; border-top: 2px solid #d8dadd; display: flex; align-items: flex-end; }

.toolbar { height: 136px; background: #f6f7f9; border-top: 2px solid #d4d7db; display: flex; }
.index { width: 275px; padding-top: 8px; }
.index svg { margin-left: 128px; }
.index b { display: block; padding-left: 57px; font-weight: 400; font-size: 44.500px; line-height: 50px; margin-top: 8px; color: #179417; }
.index p { display: flex; padding-left: 36px; font-size: 39.500px; line-height: 52px; color: #666; }
.index em { margin-left: 39px; font-size: 40.500px; color: #179417; }
.tool { width: 201.500px; display: flex; flex-direction: column; align-items: center; padding-top: 8px; font-size: 39px; line-height: 77px; color: #666; }
.add { color: #d95a17; }
```
